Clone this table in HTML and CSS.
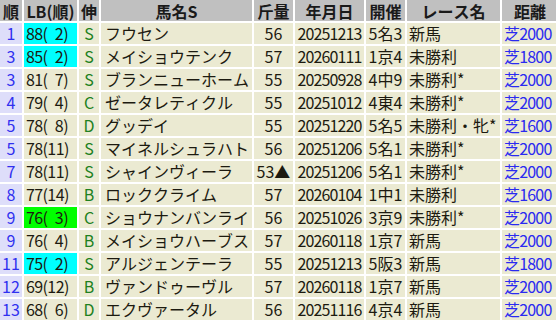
FILE: index.html
```html
<!DOCTYPE html>
<html lang="ja">
<head>
<meta charset="utf-8">
<title>出走馬一覧</title>
<link rel="stylesheet" href="styles.css">
</head>
<body>
<table class="tbl">
  <colgroup>
    <col class="c-rank"><col class="c-lb"><col class="c-nobi"><col class="c-name"><col class="c-kin"><col class="c-date"><col class="c-kai"><col class="c-race"><col class="c-dist">
  </colgroup>
  <thead>
    <tr><th>順</th><th>LB(順)</th><th>伸</th><th>馬名S</th><th>斤量</th><th>年月日</th><th>開催</th><th>レース名</th><th>距離</th></tr>
  </thead>
  <tbody>
    <tr><td class="rank">1</td><td class="lb cyan">88( 2)</td><td class="nobi">S</td><td class="name">フウセン</td><td class="ctr">56</td><td class="ctr num">20251213</td><td class="ctr">5名3</td><td class="race">新馬</td><td class="dist">芝2000</td></tr>
    <tr><td class="rank">3</td><td class="lb cyan">85( 2)</td><td class="nobi">S</td><td class="name">メイショウテンク</td><td class="ctr">57</td><td class="ctr num">20260111</td><td class="ctr">1京4</td><td class="race">未勝利</td><td class="dist">芝1800</td></tr>
    <tr><td class="rank">3</td><td class="lb">81( 7)</td><td class="nobi">S</td><td class="name">ブランニューホーム</td><td class="ctr">55</td><td class="ctr num">20250928</td><td class="ctr">4中9</td><td class="race">未勝利*</td><td class="dist">芝2000</td></tr>
    <tr><td class="rank">4</td><td class="lb">79( 4)</td><td class="nobi">C</td><td class="name">ゼータレティクル</td><td class="ctr">55</td><td class="ctr num">20251012</td><td class="ctr">4東4</td><td class="race">未勝利*</td><td class="dist">芝2000</td></tr>
    <tr><td class="rank">5</td><td class="lb">78( 8)</td><td class="nobi">D</td><td class="name">グッデイ</td><td class="ctr">55</td><td class="ctr num">20251220</td><td class="ctr">5名5</td><td class="race">未勝利・牝*</td><td class="dist">芝1600</td></tr>
    <tr><td class="rank">5</td><td class="lb">78(11)</td><td class="nobi">S</td><td class="name">マイネルシュラハト</td><td class="ctr">56</td><td class="ctr num">20251206</td><td class="ctr">5名1</td><td class="race">未勝利*</td><td class="dist">芝2000</td></tr>
    <tr><td class="rank">7</td><td class="lb">78(11)</td><td class="nobi">S</td><td class="name">シャインヴィーラ</td><td class="ctr">53▲</td><td class="ctr num">20251206</td><td class="ctr">5名1</td><td class="race">未勝利*</td><td class="dist">芝2000</td></tr>
    <tr><td class="rank">8</td><td class="lb">77(14)</td><td class="nobi">B</td><td class="name">ロッククライム</td><td class="ctr">57</td><td class="ctr num">20260104</td><td class="ctr">1中1</td><td class="race">未勝利</td><td class="dist">芝1600</td></tr>
    <tr><td class="rank">9</td><td class="lb green">76( 3)</td><td class="nobi">C</td><td class="name">ショウナンバンライ</td><td class="ctr">56</td><td class="ctr num">20251026</td><td class="ctr">3京9</td><td class="race">未勝利*</td><td class="dist">芝2000</td></tr>
    <tr><td class="rank">9</td><td class="lb">76( 4)</td><td class="nobi">B</td><td class="name">メイショウハーブス</td><td class="ctr">57</td><td class="ctr num">20260118</td><td class="ctr">1京7</td><td class="race">新馬</td><td class="dist">芝2000</td></tr>
    <tr><td class="rank">11</td><td class="lb cyan">75( 2)</td><td class="nobi">S</td><td class="name">アルジェンテーラ</td><td class="ctr">55</td><td class="ctr num">20251213</td><td class="ctr">5阪3</td><td class="race">新馬</td><td class="dist">芝1800</td></tr>
    <tr><td class="rank">12</td><td class="lb">69(12)</td><td class="nobi">B</td><td class="name">ヴァンドゥーヴル</td><td class="ctr">57</td><td class="ctr num">20260118</td><td class="ctr">1京7</td><td class="race">新馬</td><td class="dist">芝2000</td></tr>
    <tr><td class="rank">13</td><td class="lb">68( 6)</td><td class="nobi">D</td><td class="name">エクヴァータル</td><td class="ctr">56</td><td class="ctr num">20251116</td><td class="ctr">4京4</td><td class="race">新馬</td><td class="dist">芝2000</td></tr>
  </tbody>
</table>
</body>
</html>
```
FILE: styles.css
```css
html, body {
  margin: 0;
  padding: 0;
  background: #ffffff;
  overflow: hidden;
}

.tbl {
  border-collapse: separate;
  border-spacing: 2px;
  margin: -2px 0 0 -2px;
  table-layout: fixed;
  width: 562px;
  font-family: "Noto Sans CJK JP", "Noto Sans", sans-serif;
  font-size: 16px;
  font-kerning: none;
  color: #1c1a10;
}

.c-rank { width: 22px; }
.c-lb { width: 53px; }
.c-nobi { width: 20px; }
.c-name { width: 151px; }
.c-kin { width: 39px; }
.c-date { width: 69px; }
.c-kai { width: 39px; }
.c-race { width: 93px; }
.c-dist { width: 56px; }

.tbl th,
.tbl td {
  height: 21px;
  line-height: 21px;
  padding: 0;
  white-space: pre;
}

.tbl th {
  height: 19px;
  line-height: 19px;
  padding-top: 2px;
  background: #c0c0c0;
  font-weight: bold;
  text-align: center;
  color: #1a1a1a;
}

.tbl td {
  background: #ebead2;
}

.tbl td.rank {
  background: #dedefa;
  color: #3030f0;
  text-align: center;
}

.tbl td.lb {
  padding-left: 2px;
  letter-spacing: -0.6px;
  word-spacing: 4.5px;
}

.tbl td.cyan { background: #00ffff; }
.tbl td.green { background: #00ff00; }

.tbl td.nobi {
  text-align: center;
  color: #208020;
}

.tbl td.name {
  padding-left: 4px;
}

.tbl td.ctr {
  text-align: center;
}

.tbl td.num {
  letter-spacing: -0.9px;
}

.tbl td.race {
  padding-left: 2px;
}

.tbl td.dist {
  padding-left: 2px;
  letter-spacing: -0.8px;
  color: #2a2af0;
}
```
